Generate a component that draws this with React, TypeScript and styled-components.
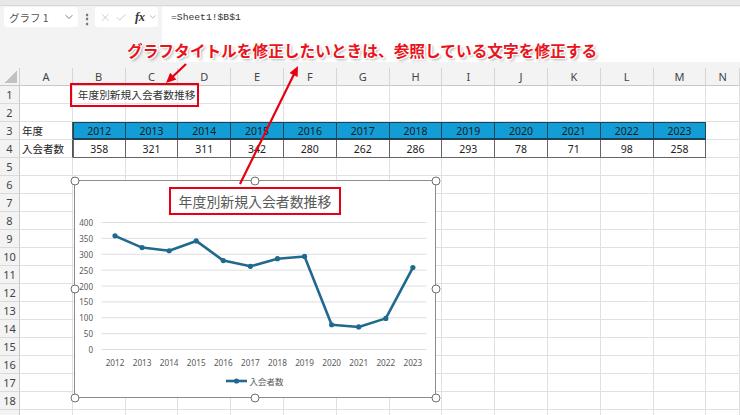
import React from 'react';
import styled, { createGlobalStyle } from 'styled-components';
import { ChevronDown, X, Check } from 'lucide-react';

const GlobalStyle = createGlobalStyle`
  html, body { margin: 0; padding: 0; background: #fff; overflow: hidden; }
  body { font-family: "Noto Sans CJK JP", "Noto Sans", sans-serif; }
`;

const Page = styled.div`
  position: relative;
  width: 740px;
  height: 415px;
  overflow: hidden;
  background: #fff;
`;

const TopStrip = styled.div`
  height: 5px;
  background: #e8e8e8;
  border-bottom: 1px solid #d8d8d8;
`;

const Toolbar = styled.div`
  height: 62px;
  box-sizing: border-box;
  padding-top: 1px;
  background: #f3f3f3;
  display: flex;
  align-items: flex-start;
`;

const NameBox = styled.div`
  margin-left: 4px;
  width: 74px;
  height: 20px;
  box-sizing: border-box;
  padding: 0 3px 0 5px;
  background: #fff;
  border-radius: 3px;
  display: flex;
  align-items: center;
  justify-content: space-between;
  font-size: 10.5px;
  color: #555;
`;

const Dots = styled.div`
  width: 17px;
  height: 20px;
  display: flex;
  align-items: center;
  justify-content: center;
  color: #666;
  font-size: 12px;
  font-weight: 700;
`;

const FxBox = styled.div`
  width: 63px;
  height: 20px;
  box-sizing: border-box;
  background: #fff;
  border-radius: 3px;
  display: flex;
  align-items: center;
  gap: 4px;
  padding-left: 4px;
  color: #bdbdbd;
`;

const FxLabel = styled.span`
  font-family: "Liberation Serif", serif;
  font-style: italic;
  font-weight: 700;
  font-size: 12.5px;
  color: #333;
  margin-left: 3px;
  letter-spacing: -0.5px;
`;

const FormulaBar = styled.div`
  margin-left: 4px;
  flex: 1;
  height: 55px;
  box-sizing: border-box;
  background: #fff;
  padding: 4px 0 0 9px;
  font-family: "Liberation Mono", monospace;
  font-size: 9.7px;
  color: #333;
  line-height: 14px;
`;

const Sheet = styled.div`
  display: grid;
  grid-template-columns: 20px repeat(13, 52.8px) 1fr;
  grid-auto-rows: 18px;
`;

const Corner = styled.div`
  background: #f3f3f3;
  border-right: 1px solid #d0d0d0;
  border-bottom: 1px solid #c8c8c8;
  box-sizing: border-box;
  display: flex;
  align-items: flex-end;
  justify-content: flex-end;
  padding: 0 2px 2px 0;
  &::after {
    content: '';
    width: 12px;
    height: 12px;
    background: linear-gradient(to bottom right, transparent 50%, #c2c2c2 50%);
  }
`;

const ColHead = styled.div`
  background: #f3f3f3;
  border-right: 1px solid #d6d6d6;
  border-bottom: 1px solid #c8c8c8;
  box-sizing: border-box;
  display: flex;
  align-items: center;
  justify-content: center;
  font-family: "Noto Sans", sans-serif;
  font-size: 11px;
  color: #444;
`;

const RowHead = styled.div`
  background: #f3f3f3;
  border-right: 1px solid #c8c8c8;
  border-bottom: 1px solid #dadada;
  box-sizing: border-box;
  display: flex;
  align-items: center;
  justify-content: center;
  font-family: "Noto Sans", sans-serif;
  font-size: 11px;
  color: #444;
`;

type Variant = 'plain' | 'year' | 'value';

const Cell = styled.div<{ $variant: Variant; $leftEdge?: boolean; $darkRight?: boolean; $align?: 'left' | 'center' }>`
  box-sizing: border-box;
  display: flex;
  align-items: center;
  justify-content: ${(p) => (p.$align === 'left' ? 'flex-start' : 'center')};
  padding-left: ${(p) => (p.$align === 'left' ? '2px' : '0')};
  white-space: nowrap;
  font-size: 10.5px;
  color: #222;
  border-right: 1px solid ${(p) => (p.$darkRight ? '#555' : '#e0e0e0')};
  border-bottom: 1px solid #e0e0e0;
  ${(p) =>
    p.$variant === 'year' &&
    `
    background: #139dd6;
    border-top: 1px solid #1f4256;
    border-right: 1px solid #1f4256;
    border-bottom: 2px solid #1f4256;
    color: #1b1b1b;
    font-family: "Noto Sans", sans-serif;
  `}
  ${(p) =>
    p.$variant === 'value' &&
    `
    border-right: 1px solid #666;
    border-bottom: 1px solid #666;
    font-family: "Noto Sans", sans-serif;
  `}
  ${(p) => p.$leftEdge && `border-left: 1px solid ${p.$variant === 'year' ? '#1f4256' : '#666'};`}
`;

const OverflowText = styled.span`
  position: relative;
  z-index: 1;
  background: #fff;
  padding: 0 3px;
  font-size: 10.7px;
  color: #333;
`;

const RedBox = styled.div`
  position: absolute;
  left: 70px;
  top: 83px;
  width: 129px;
  height: 24px;
  box-sizing: border-box;
  border: 2px solid #e60012;
  z-index: 3;
`;

const Callout = styled.div`
  position: absolute;
  left: 127px;
  top: 41px;
  font-size: 15.7px;
  line-height: 20px;
  font-weight: 700;
  color: #e8141c;
  white-space: nowrap;
  z-index: 5;
  text-shadow: 1px 0 0 #fff, -1px 0 0 #fff, 0 1px 0 #fff, 0 -1px 0 #fff, 1px 1px 0 #fff,
    -1px -1px 0 #fff, 1px -1px 0 #fff, -1px 1px 0 #fff, 2px 2px 3px rgba(0, 0, 0, 0.35);
`;

const ArrowLayer = styled.svg`
  position: absolute;
  left: 0;
  top: 0;
  pointer-events: none;
  z-index: 6;
`;

const ChartFrame = styled.div`
  position: absolute;
  left: 74px;
  top: 180px;
  width: 362px;
  height: 218px;
  box-sizing: border-box;
  border: 1px solid #8c8c8c;
  background: #fff;
  z-index: 4;
  display: flex;
  flex-direction: column;
  align-items: center;
  padding-top: 6px;
`;

const ChartTitle = styled.div`
  width: 172px;
  height: 28px;
  box-sizing: border-box;
  border: 2px solid #e60012;
  display: flex;
  align-items: center;
  justify-content: center;
  font-size: 13.9px;
  color: #595959;
  white-space: nowrap;
`;

const Plot = styled.svg`
  display: block;
  align-self: flex-start;
`;

const Legend = styled.div`
  height: 22px;
  display: flex;
  align-items: center;
  gap: 2px;
  font-size: 8.5px;
  color: #595959;
`;

const Handle = styled.div<{ $x: string; $y: string }>`
  position: absolute;
  left: ${(p) => p.$x};
  top: ${(p) => p.$y};
  width: 9px;
  height: 9px;
  box-sizing: border-box;
  border: 1.5px solid #6f6f6f;
  border-radius: 50%;
  background: #fff;
  transform: translate(-50%, -50%);
  margin-left: ${(p) => (p.$x === '0%' ? '-0.5px' : p.$x === '100%' ? '0.5px' : '0')};
  margin-top: ${(p) => (p.$y === '0%' ? '-0.5px' : p.$y === '100%' ? '0.5px' : '0')};
`;

const COLS = ['A', 'B', 'C', 'D', 'E', 'F', 'G', 'H', 'I', 'J', 'K', 'L', 'M', 'N'];
const YEARS = [2012, 2013, 2014, 2015, 2016, 2017, 2018, 2019, 2020, 2021, 2022, 2023];
const VALUES = [358, 321, 311, 342, 280, 262, 286, 293, 78, 71, 98, 258];
const LINE = '#1f6a8e';

function renderCell(r: number, c: number) {
  const key = `${r}-${c}`;
  if (r === 1 && c === 1)
    return (
      <Cell key={key} $variant="plain" $align="left">
        <OverflowText>年度別新規入会者数推移</OverflowText>
      </Cell>
    );
  if ((r === 3 || r === 4) && c === 0)
    return (
      <Cell key={key} $variant="plain" $align="left" $darkRight>
        {r === 3 ? '年度' : '入会者数'}
      </Cell>
    );
  if (r === 3 && c >= 1 && c <= 12)
    return (
      <Cell key={key} $variant="year" $leftEdge={c === 1}>
        {YEARS[c - 1]}
      </Cell>
    );
  if (r === 4 && c >= 1 && c <= 12)
    return (
      <Cell key={key} $variant="value" $leftEdge={c === 1}>
        {VALUES[c - 1]}
      </Cell>
    );
  return <Cell key={key} $variant="plain" />;
}

function Chart() {
  const yOf = (v: number) => 134.5 - v * 0.3175;
  const xOf = (i: number) => 40 + i * 27.08;
  const ticks = [0, 50, 100, 150, 200, 250, 300, 350, 400];
  const pts = VALUES.map((v, i) => `${xOf(i)},${yOf(v)}`).join(' ');
  return (
    <ChartFrame>
      <ChartTitle>年度別新規入会者数推移</ChartTitle>
      <Plot width={360} height={155} viewBox="0 0 360 155">
        {ticks.map((t) => (
          <g key={t}>
            <line x1={26.5} x2={351.5} y1={yOf(t)} y2={yOf(t)} stroke="#dedede" strokeWidth={1} />
            <text
              x={18}
              y={yOf(t)}
              textAnchor="end"
              dominantBaseline="central"
              fontSize={8}
              fill="#595959"
              fontFamily="Noto Sans, sans-serif"
            >
              {t}
            </text>
          </g>
        ))}
        {YEARS.map((y, i) => (
          <text
            key={y}
            x={xOf(i)}
            y={147}
            textAnchor="middle"
            dominantBaseline="central"
            fontSize={8.2}
            fill="#595959"
            fontFamily="Noto Sans, sans-serif"
          >
            {y}
          </text>
        ))}
        <polyline points={pts} fill="none" stroke={LINE} strokeWidth={2.6} strokeLinejoin="round" />
        {VALUES.map((v, i) => (
          <circle key={i} cx={xOf(i)} cy={yOf(v)} r={2.6} fill={LINE} />
        ))}
      </Plot>
      <Legend>
        <svg width={21} height={6} viewBox="0 0 21 6">
          <line x1={0} x2={21} y1={3} y2={3} stroke={LINE} strokeWidth={2.6} />
          <circle cx={10.5} cy={3} r={2.6} fill={LINE} />
        </svg>
        <span>入会者数</span>
      </Legend>
      {(['0%', '50%', '100%'] as const).map((yy) =>
        (['0%', '50%', '100%'] as const)
          .filter((xx) => !(xx === '50%' && yy === '50%'))
          .map((xx) => <Handle key={xx + yy} $x={xx} $y={yy} />)
      )}
    </ChartFrame>
  );
}

function Arrow({ x1, y1, x2, y2 }: { x1: number; y1: number; x2: number; y2: number }) {
  const dx = x2 - x1;
  const dy = y2 - y1;
  const len = Math.hypot(dx, dy);
  const ux = dx / len;
  const uy = dy / len;
  const hl = 10;
  const hw = 4.5;
  const bx = x2 - ux * hl;
  const by = y2 - uy * hl;
  const p1 = `${x2},${y2}`;
  const p2 = `${bx - uy * hw},${by + ux * hw}`;
  const p3 = `${bx + uy * hw},${by - ux * hw}`;
  return (
    <g>
      <line x1={x1} y1={y1} x2={bx + ux * 2} y2={by + uy * 2} stroke="#e60012" strokeWidth={2.2} />
      <polygon points={`${p1} ${p2} ${p3}`} fill="#e60012" />
    </g>
  );
}

export default function App() {
  const rows: React.ReactNode[] = [];
  rows.push(<Corner key="corner" />);
  COLS.forEach((c) => rows.push(<ColHead key={`h-${c}`}>{c}</ColHead>));
  for (let r = 1; r <= 19; r++) {
    rows.push(<RowHead key={`r-${r}`}>{r < 19 ? r : ''}</RowHead>);
    for (let c = 0; c < COLS.length; c++) rows.push(renderCell(r, c));
  }

  return (
    <Page>
      <GlobalStyle />
      <TopStrip />
      <Toolbar>
        <NameBox>
          <span>グラフ 1</span>
          <ChevronDown size={12} strokeWidth={1.6} color="#555" />
        </NameBox>
        <Dots>⋮</Dots>
        <FxBox>
          <X size={13} strokeWidth={1.4} />
          <Check size={13} strokeWidth={1.4} />
          <FxLabel>fx</FxLabel>
          <ChevronDown size={10} strokeWidth={1.4} color="#888" />
        </FxBox>
        <FormulaBar>=Sheet1!$B$1</FormulaBar>
      </Toolbar>
      <Sheet>{rows}</Sheet>
      <RedBox />
      <Chart />
      <Callout>グラフタイトルを修正したいときは、参照している文字を修正する</Callout>
      <ArrowLayer width={740} height={415} viewBox="0 0 740 415">
        <Arrow x1={186} y1={64} x2={166} y2={83} />
        <Arrow x1={240} y1={184} x2={298} y2={66} />
      </ArrowLayer>
    </Page>
  );
}
